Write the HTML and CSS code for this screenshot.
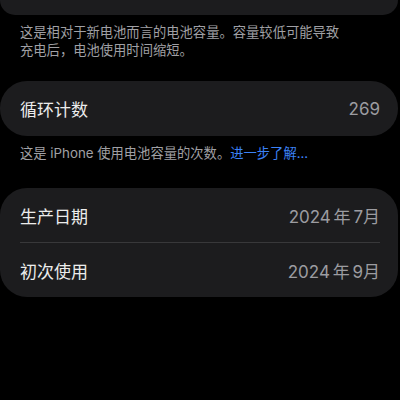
FILE: index.html
```html
<!DOCTYPE html>
<html lang="zh-CN">
<head>
    <meta charset="UTF-8">
    <meta name="viewport" content="width=device-width, initial-scale=1.0">
    <title>电池健康</title>
    <link rel="stylesheet" href="styles.css">
</head>
<body>
    <!-- Capacity card, scrolled mostly out of view -->
    <div class="card card-top"></div>
    <p class="note note-capacity">这是相对于新电池而言的电池容量。容量较低可能导致充电后，电池使用时间缩短。</p>

    <!-- Cycle count -->
    <div class="card card-cycle">
        <div class="row">
            <span class="label">循环计数</span>
            <span class="value">269</span>
        </div>
    </div>
    <p class="note">这是 iPhone 使用电池容量的次数。<a href="#" class="link">进一步了解...</a></p>

    <!-- Dates -->
    <div class="card card-dates">
        <div class="row">
            <span class="label">生产日期</span>
            <span class="value">2024 年 7月</span>
        </div>
        <div class="divider"></div>
        <div class="row">
            <span class="label">初次使用</span>
            <span class="value">2024 年 9月</span>
        </div>
    </div>
</body>
</html>
```

FILE: styles.css
```css
body {
    margin: 0;
    background-color: #000000;
    color: #ffffff;
    font-family: Inter, "Noto Sans CJK SC", sans-serif;
    width: 400px;
    height: 400px;
    overflow: hidden;
}

.card {
    background-color: #1c1c1e;
    margin: 0 2px 0 0;
    border-radius: 27px;
}

.card-top {
    height: 15px;
    border-radius: 0 0 27px 27px;
}

.card-cycle {
    margin-top: 22px;
}

.card-dates {
    margin-top: 26px;
    padding: 0 18px 0 20px;
}

.card-cycle .row {
    padding: 0 18px 0 20px;
    height: 55px;
}

.row {
    display: flex;
    justify-content: space-between;
    align-items: center;
    height: 54px;
}

.label {
    font-size: 17px;
    color: #ececec;
}

.value {
    font-size: 17px;
    color: #9c9ca1;
    word-spacing: -2px;
}

.divider {
    height: 1px;
    background-color: #38383a;
}

.note {
    margin: 8px 0 0 20px;
    font-size: 13.3px;
    line-height: 18px;
    color: #a0a0a5;
}

.note-capacity {
    width: 324px;
}

.link {
    color: #3b82f6;
    text-decoration: none;
}
```
